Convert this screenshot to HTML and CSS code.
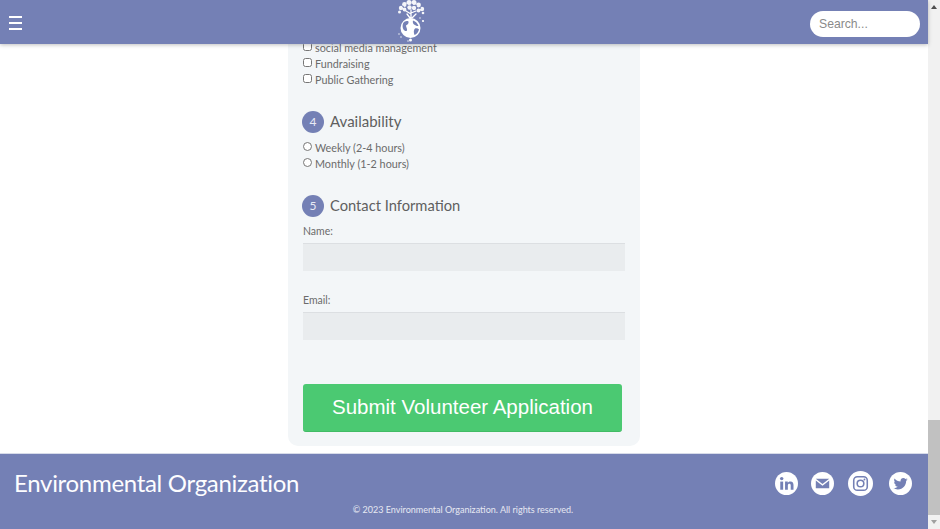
FILE: index.html
```html
<!DOCTYPE html>
<html lang="en">
<head>
<meta charset="utf-8">
<title>Volunteer Application</title>
<link rel="stylesheet" href="styles.css">
</head>
<body>
<div class="viewport">
  <div class="page">
    <header class="topbar">
      <button class="menu" type="button" aria-label="Menu"><span></span><span></span><span></span></button>
      <svg class="logo" viewBox="0 0 30 44" aria-label="Logo">
        <g fill="#fff" opacity=".92">
          <circle cx="5" cy="8" r="2.200"/><circle cx="8.500" cy="4.500" r="2.400"/><circle cx="13" cy="2.500" r="2.500"/><circle cx="18" cy="2.500" r="2.500"/><circle cx="22.500" cy="5" r="2.400"/><circle cx="26" cy="9" r="2.200"/>
          <circle cx="3.500" cy="12" r="1.500"/><circle cx="8.500" cy="9.500" r="2"/><circle cx="13.500" cy="7.500" r="2.200"/><circle cx="18" cy="8" r="2.200"/><circle cx="22.500" cy="10.500" r="2"/><circle cx="27" cy="13" r="1.300"/>
        </g>
        <g fill="#7480b5">
          <circle cx="7" cy="6.500" r=".7"/><circle cx="11" cy="5" r=".8"/><circle cx="16" cy="4.500" r=".8"/><circle cx="20.500" cy="6" r=".7"/><circle cx="24.500" cy="8" r=".7"/><circle cx="11" cy="9" r=".7"/><circle cx="16" cy="10" r=".7"/><circle cx="20" cy="10.500" r=".7"/><circle cx="6" cy="10.500" r=".7"/>
        </g>
        <path d="M15 10V18M15 14L10 11M15 13L20 11M14 18L11 14M16 18L20 14" fill="none" stroke="#fff" stroke-width="1.300" stroke-linecap="round"/>
        <circle cx="14.500" cy="28" r="10" fill="#fff"/>
        <g fill="#7480b5">
          <path d="M7 23.500C8.500 21 11 20.500 12.500 21.500C13 23.500 11.500 24.500 10 25.500C10 27.500 11.500 28.500 11 30.500C10 31.500 8.500 31 7.500 29.500C6.500 28 6.300 25.500 7 23.500Z"/>
          <path d="M17 20.500C19 21 21.500 23 22.500 26C21 26.500 19.500 25 18 24.500C17 23.500 16.500 22 17 20.500Z"/>
          <path d="M19 28.500C20.500 28 22 28.500 23 29.500C22.500 32 20.500 34.500 18.500 35C17.500 33 17.500 30 19 28.500Z"/>
        </g>
        <g fill="#fff">
          <circle cx="27" cy="21" r="1.100"/><circle cx="24" cy="18" r=".7"/><circle cx="3" cy="34" r=".7"/><circle cx="14.500" cy="40" r="1.500"/><circle cx="12" cy="41" r=".7"/><circle cx="5" cy="37" r=".7"/>
        </g>
      </svg>
      <input class="search" type="text" placeholder="Search...">
    </header>

    <main class="content">
      <form class="card">
        <div class="options">
          <label class="option"><input type="checkbox"><span>social media management</span></label>
          <label class="option"><input type="checkbox"><span>Fundraising</span></label>
          <label class="option"><input type="checkbox"><span>Public Gathering</span></label>
        </div>

        <h2 class="step"><span class="num">4</span>Availability</h2>
        <div class="options">
          <label class="option"><input type="radio" name="avail"><span>Weekly (2-4 hours)</span></label>
          <label class="option"><input type="radio" name="avail"><span>Monthly (1-2 hours)</span></label>
        </div>

        <h2 class="step step-contact"><span class="num">5</span>Contact Information</h2>
        <label class="field-label">Name:</label>
        <input class="field" type="text">
        <label class="field-label">Email:</label>
        <input class="field" type="text">

        <button class="submit" type="button">Submit Volunteer Application</button>
      </form>
    </main>

    <footer class="footer">
      <div class="footer-top">
        <div class="brand">Environmental Organization</div>
        <div class="social">
          <svg class="soc" viewBox="0 0 24 24"><circle cx="12" cy="12" r="12" fill="#fff"/><g fill="#7480b5"><rect x="5.500" y="10" width="3" height="8.500"/><circle cx="7" cy="6.900" r="1.800"/><path d="M10.500 10H13.300V11.300C14 10.300 15 9.800 16.200 9.800C18.500 9.800 19.300 11.300 19.300 13.600V18.500H16.400V14.200C16.400 13 16 12.300 15 12.300C14 12.300 13.400 13 13.400 14.200V18.500H10.500Z"/></g></svg>
          <svg class="soc" viewBox="0 0 24 24"><circle cx="12" cy="12" r="12" fill="#fff"/><path fill="#7480b5" d="M5 7H19L12 12.500ZM5 8.800L12 14.300L19 8.800V17H5Z"/></svg>
          <svg class="soc soc-lg" viewBox="0 0 24 24"><circle cx="12" cy="12" r="12" fill="#fff"/><g fill="none" stroke="#7480b5" stroke-width="1.500"><rect x="5.500" y="5.500" width="13" height="13" rx="3.500"/><circle cx="12" cy="12" r="3.200"/></g><circle cx="15.800" cy="8.200" r="0.900" fill="#7480b5"/></svg>
          <svg class="soc soc-last" viewBox="0 0 24 24"><circle cx="12" cy="12" r="12" fill="#fff"/><path fill="#7480b5" d="M19.500 7.700C19 8 18.400 8.100 17.800 8.200C18.400 7.800 18.900 7.200 19.100 6.500C18.500 6.900 17.900 7.100 17.200 7.300C16.600 6.700 15.800 6.300 15 6.300C13.300 6.300 12 7.700 12 9.300C12 9.500 12 9.800 12.100 10C9.600 9.900 7.300 8.700 5.800 6.800C5.500 7.200 5.400 7.800 5.400 8.300C5.400 9.300 5.900 10.300 6.700 10.800C6.200 10.800 5.700 10.700 5.300 10.400C5.300 11.900 6.300 13.100 7.700 13.400C7.200 13.500 6.800 13.500 6.300 13.400C6.700 14.600 7.800 15.500 9.100 15.500C7.800 16.500 6.200 17 4.600 16.800C5.900 17.700 7.500 18.200 9.200 18.200C14.800 18.200 17.900 13.500 17.900 9.400V9C18.500 8.600 19.100 8.200 19.500 7.700Z"/></svg>
        </div>
      </div>
      <p class="copyright">© 2023 Environmental Organization. All rights reserved.</p>
    </footer>
  </div>
  <div class="scrollbar" aria-hidden="true">
    <span class="arrow-up"></span>
    <div class="track"><div class="thumb"></div></div>
    <span class="arrow-down"></span>
  </div>
</div>
</body>
</html>
```
FILE: styles.css
```css
* { box-sizing: border-box; }
html, body { margin: 0; height: 529px; overflow: hidden; }
body { font-family: "Lato", "Open Sans", sans-serif; color: #555; background: #fff; }

.viewport { display: flex; height: 529px; }

.page {
  position: relative;
  flex: 1;
  min-width: 0;
  display: flex;
  flex-direction: column;
}

.topbar {
  position: absolute;
  top: 0;
  left: 0;
  right: 0;
  height: 44px;
  z-index: 2;
  display: flex;
  align-items: center;
  justify-content: space-between;
  padding: 2px 8px 0 9px;
  background: #7480b5;
  box-shadow: 0 1px 4px rgba(0, 0, 0, .25);
}

.menu {
  display: flex;
  flex-direction: column;
  gap: 4px;
  width: 13px;
  padding: 0;
  border: 0;
  background: none;
}
.menu span { display: block; height: 2px; background: #fff; }

.logo {
  position: absolute;
  left: 396px;
  top: 0;
  width: 30px;
  height: 44px;
}

.search {
  width: 110px;
  height: 26px;
  margin-top: 2px;
  padding: 0 9px;
  border: 0;
  border-radius: 13px;
  background: #fff;
  font: 12.200px "Liberation Sans", sans-serif;
}
.search::placeholder { color: #8a8a8a; opacity: 1; }

.content {
  flex: 1;
  display: flex;
  justify-content: center;
  margin-bottom: 7px;
}

.card {
  width: 352px;
  height: 446px;
  padding: 40px 15px 0;
  background: #f3f6f8;
  border-radius: 0 0 10px 10px;
}

.options { display: flex; flex-direction: column; }
.option {
  display: flex;
  align-items: flex-start;
  height: 16px;
  font-size: 10.800px;
  line-height: 16px;
  color: #6b6b6b;
}
.option input { width: 9px; height: 9px; margin: 2px 3px 0 0; flex: none; }

.step {
  display: flex;
  align-items: flex-start;
  gap: 6px;
  height: 22px;
  margin: 23px 0 7px;
  font-size: 15px;
  line-height: 20px;
  font-weight: 400;
  color: #5f5f5f;
}
.step-contact { margin-top: 23px; margin-bottom: 7px; font-size: 14.700px; }
.num {
  width: 22px;
  height: 22px;
  margin-left: -1px;
  border-radius: 50%;
  background: #7480b5;
  color: #e8ebf5;
  font-size: 12px;
  display: flex;
  align-items: center;
  justify-content: center;
}

.field-label {
  display: block;
  height: 14px;
  font-size: 10.500px;
  line-height: 14px;
  color: #6b6b6b;
}
.field {
  display: block;
  width: 100%;
  height: 28px;
  margin: 5px 0 22px;
  border: 0;
  border-top: 1px solid #dcdfe2;
  background: #e9ecee;
}

.submit {
  display: block;
  width: 319px;
  height: 48px;
  margin-top: 44px;
  padding: 0 0 2px;
  border: 0;
  border-bottom: 1px solid #42bc65;
  border-radius: 3px;
  background: #4bc972;
  color: #fff;
  font: 20.500px "Liberation Sans", sans-serif;
}

.footer {
  height: 76px;
  padding: 14px 16px 0 14px;
  background: #7480b5;
  border-top: 1px solid #d7dbe9;
  color: #fff;
}
.footer-top { display: flex; justify-content: space-between; align-items: center; height: 30px; }
.brand { font-size: 24px; line-height: 30px; letter-spacing: -.3px; color: #fdfdff; }
.social { display: flex; align-items: center; gap: 13.500px; }
.soc { width: 23px; height: 23px; display: block; }
.soc-lg { width: 25px; height: 25px; }
.soc-last { margin-left: 3px; }
.copyright {
  margin: 5px 0 0;
  text-align: center;
  font-size: 9px;
  line-height: 14px;
  color: #e6e8f2;
}

.scrollbar {
  width: 12px;
  flex: none;
  display: flex;
  flex-direction: column;
  align-items: center;
  background: #f1f1f1;
}
.track { flex: 1; width: 100%; display: flex; flex-direction: column; justify-content: flex-end; }
.thumb { height: 95px; background: #c1c1c1; }
.arrow-up, .arrow-down { width: 0; height: 0; margin: 5px 0; border-left: 3.500px solid transparent; border-right: 3.500px solid transparent; }
.arrow-up { border-bottom: 4px solid #505050; }
.arrow-down { border-top: 4px solid #a0a0a0; }
```
